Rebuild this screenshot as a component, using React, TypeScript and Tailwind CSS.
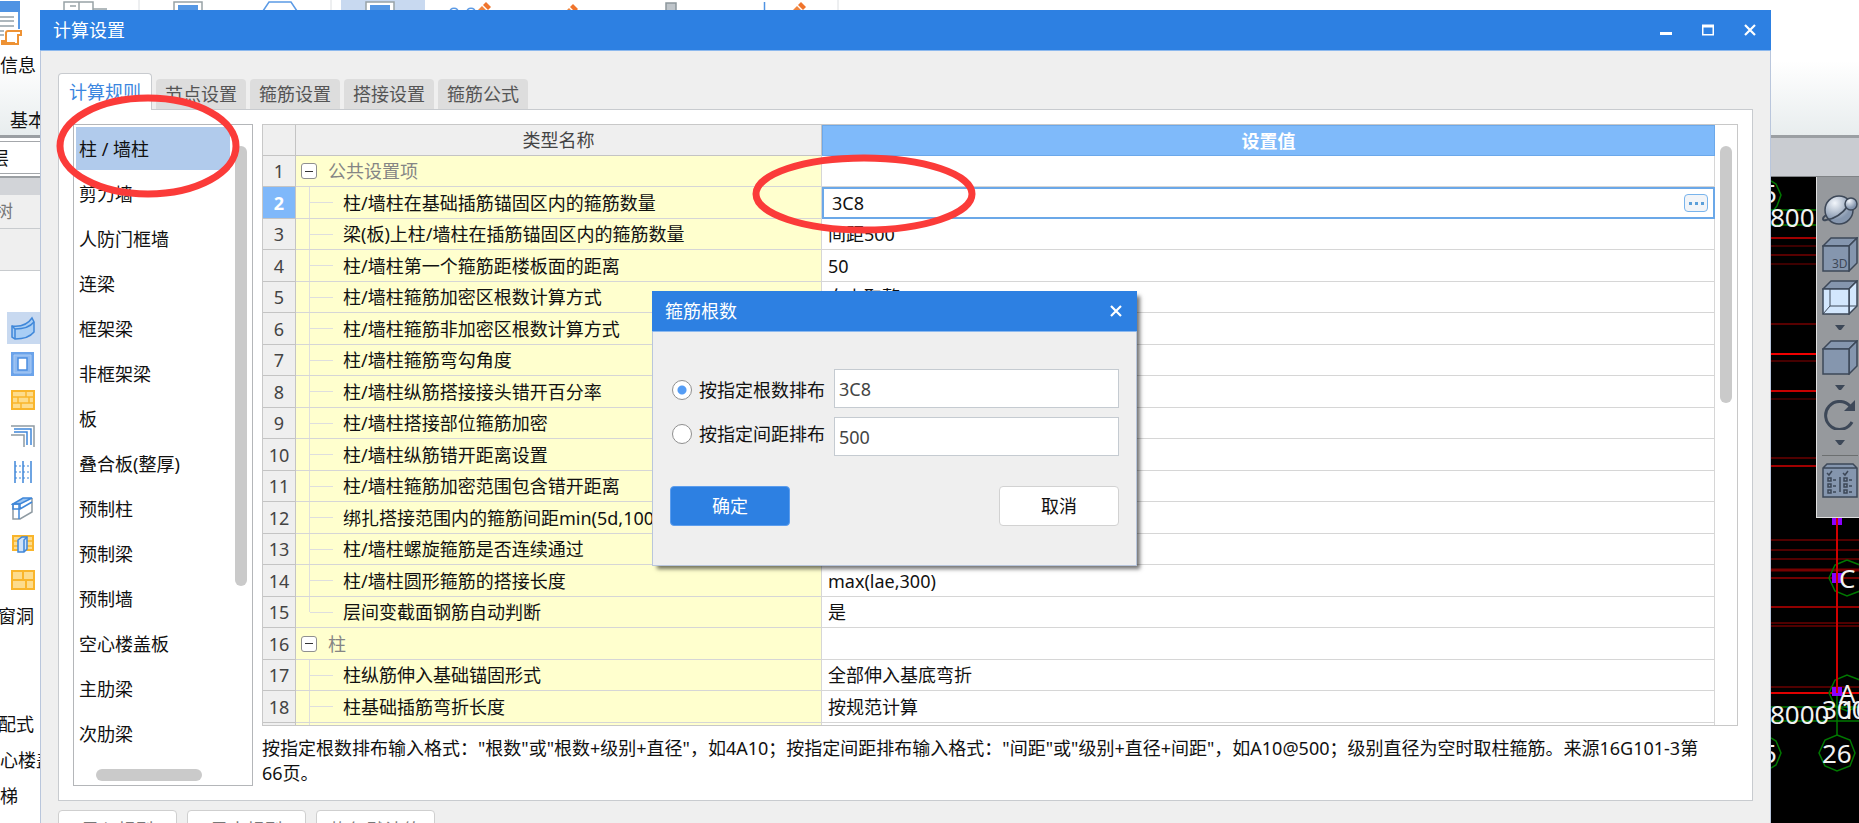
import { useState, type ReactNode } from 'react'

const TABS = ['计算规则', '节点设置', '箍筋设置', '搭接设置', '箍筋公式']

const CATEGORIES = [
  '柱 / 墙柱',
  '剪力墙',
  '人防门框墙',
  '连梁',
  '框架梁',
  '非框架梁',
  '板',
  '叠合板(整厚)',
  '预制柱',
  '预制梁',
  '预制墙',
  '空心楼盖板',
  '主肋梁',
  '次肋梁',
]

type Row = { name: string; value?: string; group?: boolean; last?: boolean }

const ROWS: Row[] = [
  { name: '公共设置项', group: true },
  { name: '柱/墙柱在基础插筋锚固区内的箍筋数量', value: '3C8' },
  { name: '梁(板)上柱/墙柱在插筋锚固区内的箍筋数量', value: '间距500' },
  { name: '柱/墙柱第一个箍筋距楼板面的距离', value: '50' },
  { name: '柱/墙柱箍筋加密区根数计算方式', value: '向上取整+1' },
  { name: '柱/墙柱箍筋非加密区根数计算方式' },
  { name: '柱/墙柱箍筋弯勾角度' },
  { name: '柱/墙柱纵筋搭接接头错开百分率' },
  { name: '柱/墙柱搭接部位箍筋加密' },
  { name: '柱/墙柱纵筋错开距离设置' },
  { name: '柱/墙柱箍筋加密范围包含错开距离' },
  { name: '绑扎搭接范围内的箍筋间距min(5d,100)' },
  { name: '柱/墙柱螺旋箍筋是否连续通过' },
  { name: '柱/墙柱圆形箍筋的搭接长度', value: 'max(lae,300)' },
  { name: '层间变截面钢筋自动判断', value: '是', last: true },
  { name: '柱', group: true },
  { name: '柱纵筋伸入基础锚固形式', value: '全部伸入基底弯折' },
  { name: '柱基础插筋弯折长度', value: '按规范计算' },
]

const ACTIVE_ROW = 1

function CloseIcon() {
  return (
    <svg width="12" height="12" viewBox="0 0 12 12" stroke="white" strokeWidth="2.2" aria-hidden="true">
      <path d="M1 1l10 10M11 1L1 11" />
    </svg>
  )
}

function Pencil({ x, y }: { x: number; y: number }) {
  return (
    <g transform={`translate(${x} ${y})`}>
      <path d="M8 0l5 5-3 3-5-5z" fill="#f0742c" />
      <path d="M4 4l5 5-4 4-5-5z" fill="#f0853f" />
      <path d="M4 3l6 6" stroke="#fff" />
    </g>
  )
}

function Ribbon() {
  return (
    <header className="relative h-[138px] border-b-[3px] border-[#9b9fa3] bg-linear-to-b from-white from-45% to-[#e8edee]">
      <svg className="absolute top-0 left-0" width="850" height="48" viewBox="0 0 850 48" aria-hidden="true">
        <path d="M0 1h20v11H0z" fill="#4f93e3" />
        <path d="M19 12v17" stroke="#5b9ae5" strokeWidth="2" />
        <path d="M0 17h14M0 21h14M0 26h14M0 31h4M0 35h4" stroke="#93a0a8" strokeWidth="1.5" />
        <path d="M8 31h13v4h-3v9H2v-3h4V33c0-1 1-2 2-2z" fill="#fff" stroke="#ee9234" strokeWidth="2" />
        <path d="M1 42h14v3H1z" fill="#ee9234" />
        <g fill="none" stroke="#98a2a6" strokeWidth="1.5">
          <path d="M64 12V2h29v8M70 6h6M79 2v8M93 9h14" />
          <path d="M174 12V2h28v10" />
        </g>
        <path d="M178 5h20v7h-20z" fill="#5497e5" />
        <path d="M263 11l6-9h22l6 9" fill="none" stroke="#5b9ae5" strokeWidth="1.5" />
        <path d="M139 0v12M331 0v12M838 0v12" stroke="#dcdfe2" />
        <path d="M341 0h84v12h-84z" fill="#c8d9f0" />
        <path d="M366 12V2h28v10z" fill="#fff" stroke="#98a2a6" strokeWidth="1.5" />
        <path d="M370 5h20v7h-20z" fill="#5497e5" />
        <path d="M450 12c0-5 8-5 8 0M467 12c0-5 8-5 8 0" fill="none" stroke="#5b9ae5" strokeWidth="1.5" />
        <Pencil x={478} y={2} />
        <Pencil x={565} y={4} />
        <path d="M666 12V3h10v9" fill="#bfc5ca" stroke="#8d979c" strokeWidth="1.5" />
        <path d="M764.500 2v10" stroke="#4f93e3" strokeWidth="1.5" />
        <Pencil x={793} y={2} />
      </svg>
      <div className="pt-[52px] leading-[26px]">信息</div>
      <div className="pt-[29px] pl-[10px] leading-[26px]">基本</div>
    </header>
  )
}

function ToolIcon({ children }: { children: ReactNode }) {
  return (
    <svg width="24" height="24" viewBox="0 0 24 24" fill="none" aria-hidden="true">
      {children}
    </svg>
  )
}

const TOOL_ICONS = [
  {
    label: '弧形梁',
    icon: (
      <ToolIcon>
        <path d="M1 10c9 1 16-2 20-8l2 4v10c-4 5-10 7-19 7l-3-2z" fill="#a9cef5" stroke="#3f87d9" strokeWidth="1.500" />
        <path d="M1 10l3 3c9 0 15-2 19-7M4 13v10" stroke="#3f87d9" strokeWidth="1.500" />
      </ToolIcon>
    ),
  },
  {
    label: '柱',
    icon: (
      <ToolIcon>
        <path d="M0 0h23v24H0z" fill="#6ba3ea" />
        <path d="M3 3h17v18H3z" fill="#8fbaf0" stroke="#a9caf4" />
        <path d="M7 6h9v12H7z" fill="#fff" stroke="#4b8de0" strokeWidth="1.500" />
      </ToolIcon>
    ),
  },
  {
    label: '砌体墙',
    icon: (
      <ToolIcon>
        <path d="M1 3h22v18H1z" fill="#fddc8c" stroke="#f9b52b" strokeWidth="2" />
        <path d="M1 9h22M1 15h22M15 3v6M7 9v6M18 9v6M10 15v6" stroke="#f9b52b" strokeWidth="1.500" />
      </ToolIcon>
    ),
  },
  {
    label: '拐角',
    icon: (
      <ToolIcon>
        <path d="M0 2h23v21M0 11h13v12" stroke="#8f9ba3" strokeWidth="1.500" />
        <path d="M3 5h17v16M3 8h13v13" stroke="#3f87d9" strokeWidth="1.500" />
      </ToolIcon>
    ),
  },
  {
    label: '钢筋',
    icon: (
      <ToolIcon>
        <path d="M4 1v22M12 1v22M20 1v22" stroke="#3f87d9" strokeWidth="1.500" />
        <path d="M4 6h16M4 12h16M4 18h16" stroke="#3f87d9" strokeDasharray="2 2" />
      </ToolIcon>
    ),
  },
  {
    label: '墙体',
    icon: (
      <ToolIcon>
        <path d="M2 8v15h7l12-7V2" fill="#fff" stroke="#8f9ba3" strokeWidth="1.500" />
        <path d="M2 8L12 2h9l-12 6zM8 8v15" fill="#9cc5f3" stroke="#3f87d9" strokeWidth="1.500" />
        <path d="M2 8h7v5H2zM9 13l12-7" stroke="#3f87d9" strokeWidth="1.500" />
      </ToolIcon>
    ),
  },
  {
    label: '门',
    icon: (
      <ToolIcon>
        <path d="M2 4h20v14H2z" fill="#fddc8c" stroke="#f9b52b" strokeWidth="2" />
        <path d="M2 9h20M2 14h20" stroke="#f9b52b" strokeWidth="1.500" />
        <path d="M7 8l4-3h5v12l-3 3H7z" fill="#cfe3fa" stroke="#3f87d9" strokeWidth="1.500" />
        <path d="M13 20V8l3-3" stroke="#3f87d9" strokeWidth="1.500" />
      </ToolIcon>
    ),
  },
  {
    label: '板',
    icon: (
      <ToolIcon>
        <path d="M1 3h22v18H1zM1 12h22M12 3v9M15 12v9" fill="#fddc8c" stroke="#f9b52b" strokeWidth="2" />
      </ToolIcon>
    ),
  },
]

function Sidebar() {
  return (
    <aside className="w-10 shrink-0 overflow-hidden bg-white whitespace-nowrap">
      <div className="mt-[3px] h-[33px] border-y border-[#a4a7ab] leading-[32px]">
        <span className="-ml-[9px]">层</span>
      </div>
      <div className="mt-[2px] h-[19px] border-t-2 border-[#9b9fa3] bg-[#d2d4d8]" />
      <div className="h-[34px] border-b border-[#c8cbce] bg-[#efefef] leading-[33px] text-[#777]">
        <span className="-ml-[5px]">树</span>
      </div>
      <div className="h-[42px] border-b border-[#c8cbce] bg-[#efefef]" />
      <div className="pt-[39px]">
        {TOOL_ICONS.map((tool, i) => (
          <div key={tool.label} className="flex h-9 items-center pl-[7px]">
            <button
              type="button"
              aria-label={tool.label}
              className={`flex h-8 w-full items-center pl-1 ${i === 0 ? 'bg-[#c8d9f0]' : ''}`}
            >
              {tool.icon}
            </button>
          </div>
        ))}
        <div className="h-9 leading-9">
          <span className="-ml-[2px]">窗洞</span>
        </div>
        <div className="mt-[72px] h-9 leading-9">
          <span className="-ml-[2px]">配式</span>
        </div>
        <div className="h-9 leading-9">心楼盖</div>
        <div className="h-9 leading-9">梯</div>
      </div>
    </aside>
  )
}

const BEAM_LINES = [
  { y: 61, w: 2, c: '#a00000' },
  { y: 69, w: 1, c: '#7c0000' },
  { y: 78, w: 1, c: '#b00000' },
  { y: 87, w: 1, c: '#7c0000' },
  { y: 147, w: 1, c: '#b00000' },
  { y: 177, w: 2, c: '#f00000' },
  { y: 184, w: 1, c: '#8c0000' },
  { y: 214, w: 2, c: '#c80000' },
  { y: 222, w: 1, c: '#6c0000' },
  { y: 281, w: 2, c: '#500000' },
  { y: 289, w: 2, c: '#a00000' },
  { y: 363, w: 2, c: '#500000' },
  { y: 373, w: 2, c: '#500000' },
  { y: 382, w: 2, c: '#500000' },
  { y: 393, w: 3, c: '#780000' },
  { y: 401, w: 1, c: '#e00000' },
  { y: 430, w: 2, c: '#900000' },
  { y: 446, w: 2, c: '#500000' },
  { y: 449, w: 2, c: '#500000' },
  { y: 510, w: 2, c: '#500000' },
  { y: 516, w: 2, c: '#e00000' },
]

function Drawing() {
  return (
    <svg className="absolute top-0 right-0" width="88" height="646" viewBox="0 0 88 646" aria-label="平面图">
      {BEAM_LINES.map((line) => (
        <path key={line.y} d={`M0 ${line.y}h88`} stroke={line.c} strokeWidth={line.w} />
      ))}
      <g fill="none" stroke="#007800" strokeWidth="1.5">
        <path d="M66 516v42M0 33h46M0 48h46M0 530h88M0 544h88" />
        <path d="M0 4l5 3 5 11-4 11-4 5" />
        <path d="M76 383l13 5M76 383l-12 5-6 13 6 13 12 5 13-5" />
        <path d="M89 503l-13-5-12 5-6 13 6 13 12 5 13-5" />
        <path d="M66 558l13 5 5 13-5 13-13 5-12-5-6-13 6-13z" />
        <path d="M0 561l5 3 5 12-5 12-5 3" />
      </g>
      <path d="M61 341h10v7H61zM61 396h10v10H61zM61 510h10v9H61z" fill="#8a00ff" />
      <path d="M66 341v175" stroke="#d00000" strokeWidth="2" />
      <g fill="#f2f2f2" fontSize="26">
        <text x="-9" y="26">5</text>
        <text x="-1" y="50">800</text>
        <text x="68" y="411">C</text>
        <text x="68" y="526">A</text>
        <text x="-1" y="547">8000</text>
        <text x="51" y="542">300</text>
        <text x="70" y="542">100</text>
        <text x="-9" y="586">5</text>
        <text x="51" y="586">26</text>
      </g>
    </svg>
  )
}

function CubeIcon({ kind }: { kind: '3d' | 'wire' | 'solid' }) {
  const face = kind === 'wire' ? '#d3e7fd' : '#8596ae'
  return (
    <svg width="36" height="35" viewBox="0 0 36 35" stroke="#3d4858" strokeWidth="1.500" aria-hidden="true">
      <path d="M1 9l8-8h26l-8 8z" fill="#8596ae" />
      <path d="M27 9l8-8v25l-8 8z" fill={face} />
      <path d="M1 9h26v25H1z" fill={face} />
      {kind === 'wire' && <path d="M8 9v17h27M8 26l-7 8" fill="none" strokeWidth="1" />}
      {kind === '3d' && (
        <text x="10" y="31" fontSize="12" fill="#3d4858" stroke="none">
          3D
        </text>
      )}
    </svg>
  )
}

function Caret() {
  return (
    <svg className="my-[10px]" width="10" height="5" viewBox="0 0 10 5" aria-hidden="true">
      <path d="M0 0h10L6 5H4z" fill="#3d4858" />
    </svg>
  )
}

function ViewToolbar() {
  return (
    <div className="absolute top-0 right-0 flex h-[341px] w-[43px] flex-col items-center border-b border-l border-[#e0e0e0] bg-[#96999d] pt-4 pl-[3px]">
      <button type="button" aria-label="动态观察">
        <svg width="36" height="32" viewBox="0 0 36 32" aria-hidden="true">
          <defs>
            <radialGradient id="sphere" cx="0.35" cy="0.25" r="0.6">
              <stop offset="0" stopColor="#f2f6fb" />
              <stop offset="1" stopColor="#8596ae" />
            </radialGradient>
          </defs>
          <g stroke="#3d4858" strokeWidth="1.500">
            <circle cx="17" cy="17" r="14" fill="url(#sphere)" />
            <path d="M4 22c-4 3-4 6 0 5 8-1 16-6 22-14" fill="none" strokeWidth="2" />
            <circle cx="29" cy="11" r="6" fill="url(#sphere)" />
          </g>
        </svg>
      </button>
      <button type="button" aria-label="三维" className="mt-3">
        <CubeIcon kind="3d" />
      </button>
      <button type="button" aria-label="线框" className="mt-2">
        <CubeIcon kind="wire" />
      </button>
      <Caret />
      <button type="button" aria-label="实体">
        <CubeIcon kind="solid" />
      </button>
      <Caret />
      <button type="button" aria-label="旋转">
        <svg width="36" height="30" viewBox="0 2 36 30" fill="none" aria-hidden="true">
          <path d="M30 24A14 14 0 1 1 28 8" stroke="#3d4858" strokeWidth="3" />
          <path d="M33 2v11H22z" fill="#3d4858" />
        </svg>
      </button>
      <Caret />
      <div className="h-px w-9 bg-[#6c6f70]" />
      <button type="button" aria-label="显示设置" className="mt-[7px]">
        <svg width="36" height="35" viewBox="0 0 36 35" fill="none" stroke="#3d4858" strokeWidth="1.500" aria-hidden="true">
          <path d="M1 5l4-4h26l4 4v29H1zM1 5h34" fill="#8596ae" />
          <path d="M5 10l2 2 3-4M21 10l2 2 3-4M18 14v15" />
          <path d="M6 15h3v3H6zM6 21h3v3H6zM6 27h3v3H6zM22 15h3v3h-3zM22 21h3v3h-3zM22 27h3v3h-3z" />
          <path d="M11 17h3M11 23h3M11 29h3M27 17h3M27 23h3M27 29h3" />
        </svg>
      </button>
    </div>
  )
}

function CategoryList() {
  const [selected, setSelected] = useState(0)
  return (
    <div className="flex w-[180px] shrink-0 flex-col border border-[#b4b6b9] bg-white p-[2px]">
      <div className="flex justify-between">
        <ul className="w-[154px]">
          {CATEGORIES.map((name, i) => (
            <li key={name} className="h-[45px]">
              <button
                type="button"
                onClick={() => setSelected(i)}
                className={`flex h-[43px] w-full items-center pl-[3px] ${i === selected ? 'bg-[#b1cbec]' : ''}`}
              >
                {name}
              </button>
            </li>
          ))}
        </ul>
        <div className="mt-[19px] mr-[3px] h-[440px] w-3 rounded-full bg-[#cacaca]" />
      </div>
      <div className="mt-auto mb-[2px] ml-5 h-3 w-[106px] rounded-full bg-[#cacaca]" />
    </div>
  )
}

function Collapse() {
  return (
    <button
      type="button"
      aria-label="折叠"
      className="flex size-4 items-center justify-center rounded-[3px] border border-[#8f8f8f] bg-white"
    >
      <span className="h-px w-2 bg-[#333]" />
    </button>
  )
}

function NameCell({ row }: { row: Row }) {
  if (row.group) {
    return (
      <div className="flex items-center gap-[11px] pl-[5px] text-[#858585]">
        <Collapse />
        {row.name}
      </div>
    )
  }
  return (
    <div className="ml-[13px] flex h-full items-center">
      <div className={`h-full w-px ${row.last ? 'bg-linear-to-b from-[#dedede] from-50% to-transparent to-50%' : 'bg-[#dedede]'}`} />
      <div className="mr-[10px] h-px w-[23px] bg-[#dedede]" />
      {row.name}
    </div>
  )
}

function SettingsTable() {
  return (
    <div className="flex h-[602px] overflow-hidden border border-[#c8c8c8]">
      <table className="h-fit w-full table-fixed border-separate border-spacing-0 whitespace-nowrap">
        <colgroup>
          <col className="w-[33px]" />
          <col className="w-[526px]" />
          <col />
        </colgroup>
        <thead>
          <tr className="h-[31px] text-[#444]">
            <th className="border-r border-b border-[#c4c4c4] bg-[#efefef]" aria-label="序号" />
            <th className="border-r border-b border-[#c4c4c4] bg-[#efefef] p-0 font-normal">类型名称</th>
            <th className="border border-[#6ba8ea] bg-[#7fbafa] p-0 font-bold text-white">设置值</th>
          </tr>
        </thead>
        <tbody>
          {ROWS.map((row, i) => (
            <tr key={row.name} className="odd:h-[31px] even:h-[32px]">
              <td
                className={`border-r border-b border-[#c4c4c4] p-0 text-center ${
                  i === ACTIVE_ROW ? 'bg-[#7fb8fa] font-bold text-white' : 'bg-[#efefef] text-[#444]'
                }`}
              >
                {i + 1}
              </td>
              <td className="h-px border-r border-b border-[#d6d6d6] bg-[#ffffce] p-0">
                <NameCell row={row} />
              </td>
              {i === ACTIVE_ROW ? (
                <td className="p-0">
                  <div className="flex h-[32px] items-center border-2 border-[#6ba8e8] bg-white pr-[5px] pl-2">
                    <input
                      aria-label={row.name}
                      defaultValue={row.value}
                      className="min-w-0 flex-1 leading-6 outline-none"
                    />
                    <button
                      type="button"
                      aria-label="更多"
                      className="flex h-[18px] w-6 items-center justify-center gap-[3px] rounded-[4px] border border-[#79b4ec] bg-[#f1f4f8]"
                    >
                      <span className="size-[3px] bg-[#5b9fd9]" />
                      <span className="size-[3px] bg-[#5b9fd9]" />
                      <span className="size-[3px] bg-[#5b9fd9]" />
                    </button>
                  </div>
                </td>
              ) : (
                <td className="border-r border-b border-[#d6d6d6] p-0 pl-[6px]">{row.value}</td>
              )}
            </tr>
          ))}
          <tr className="h-[31px]">
            <td className="border-r border-[#c4c4c4] bg-[#efefef]" />
            <td className="h-px border-r border-[#d6d6d6] bg-[#ffffce] p-0">
              <div className="ml-[13px] h-full w-px bg-[#dedede]" />
            </td>
            <td className="border-r border-[#d6d6d6]" />
          </tr>
        </tbody>
      </table>
      <div className="w-[22px] shrink-0 px-[5px] pt-[21px]">
        <div className="h-[257px] w-3 rounded-full bg-[#cacaca]" />
      </div>
    </div>
  )
}

const RADIO =
  'size-5 appearance-none rounded-full border border-[#8f8f8f] bg-white checked:bg-[radial-gradient(circle,#559df5_4px,white_5px)]'
const FIELD = 'h-[39px] w-full border border-[#c5cbd1] bg-white pl-1 text-[#444] outline-none'

function StirrupDialog() {
  const [mode, setMode] = useState('count')
  return (
    <section
      role="dialog"
      aria-label="箍筋根数"
      className="absolute top-[281px] left-[611px] w-[485px] border border-[#b9c6dc] bg-[#efefef] shadow-[4px_4px_4px_-1px_rgba(0,0,0,0.55)]"
    >
      <div className="-mx-px -mt-px flex h-[41px] items-center justify-between border-b border-[#8db9ee] bg-[#2d80e2] pr-[15px] pl-[13px] text-white">
        <h2>箍筋根数</h2>
        <button type="button" aria-label="关闭">
          <CloseIcon />
        </button>
      </div>
      <form className="px-[17px] pt-[37px] pb-[39px]" onSubmit={(e) => e.preventDefault()}>
        <div className="flex justify-between">
          <div className="flex flex-col gap-[18px] pt-2">
            <label className="flex items-center gap-[7px] pl-[2px] leading-[26px]">
              <input
                type="radio"
                name="mode"
                className={RADIO}
                checked={mode === 'count'}
                onChange={() => setMode('count')}
              />
              按指定根数排布
            </label>
            <label className="flex items-center gap-[7px] pl-[2px] leading-[26px]">
              <input
                type="radio"
                name="mode"
                className={RADIO}
                checked={mode === 'spacing'}
                onChange={() => setMode('spacing')}
              />
              按指定间距排布
            </label>
          </div>
          <div className="flex w-[285px] flex-col gap-[9px]">
            <input aria-label="按指定根数排布" defaultValue="3C8" className={FIELD} />
            <input aria-label="按指定间距排布" defaultValue="500" className={FIELD} />
          </div>
        </div>
        <div className="mt-[30px] flex justify-between">
          <button type="submit" className="h-10 w-[120px] rounded-[4px] border border-[#5c9ded] bg-[#2d80e2] text-white">
            确定
          </button>
          <button type="button" className="h-10 w-[120px] rounded-[4px] border border-[#d2d2d2] bg-white">
            取消
          </button>
        </div>
      </form>
    </section>
  )
}

function SettingsWindow() {
  const [tab, setTab] = useState(0)
  return (
    <section
      role="dialog"
      aria-label="计算设置"
      className="absolute top-[10px] right-[88px] left-10 border-x border-[#b9c6dc] bg-[#efefef]"
    >
      <div className="-mx-px flex h-[41px] items-center justify-between border-b border-[#8db9ee] bg-[#2d80e2] pr-[15px] pl-[13px] text-white">
        <h1>计算设置</h1>
        <div className="flex items-center gap-[30px]">
          <button type="button" aria-label="最小化">
            <svg width="12" height="12" viewBox="0 0 12 12" aria-hidden="true">
              <path d="M0 8h12v3H0z" fill="white" />
            </svg>
          </button>
          <button type="button" aria-label="最大化">
            <svg width="12" height="12" viewBox="0 0 12 12" aria-hidden="true">
              <path d="M0 0.500h12v11H0zM1.500 3.500v6.500h9V3.500z" fill="white" fillRule="evenodd" />
            </svg>
          </button>
          <button type="button" aria-label="关闭">
            <CloseIcon />
          </button>
        </div>
      </div>

      <div className="px-[17px] pt-[22px]">
        <div role="tablist" className="flex h-9 items-end gap-1">
          {TABS.map((name, i) => (
            <button
              key={name}
              type="button"
              role="tab"
              aria-selected={i === tab}
              onClick={() => setTab(i)}
              className={
                i === tab
                  ? 'relative -mb-px h-[37px] w-[94px] rounded-t-[4px] border border-b-0 border-[#c8cbcf] bg-white text-[#3b86e0]'
                  : 'h-[30px] w-[90px] rounded-t-[4px] bg-[#dddddd] text-[#555]'
              }
            >
              {name}
            </button>
          ))}
        </div>
        <div className="flex gap-[9px] border border-[#c8cbcf] bg-white p-[14px]">
          <CategoryList />
          <div className="min-w-0 flex-1">
            <SettingsTable />
            <p className="min-h-[60px] pt-[10px] pr-6 leading-[25px]">
              按指定根数排布输入格式："根数"或"根数+级别+直径"，如4A10；按指定间距排布输入格式："间距"或"级别+直径+间距"，如A10@500；级别直径为空时取柱箍筋。来源16G101-3第66页。
            </p>
          </div>
        </div>
        <div className="mt-[9px] flex gap-[10px] pb-4">
          {['导入规则', '导出规则', '恢复默认值'].map((name) => (
            <button
              key={name}
              type="button"
              className="h-10 w-[119px] rounded-[4px] border border-[#cfcfcf] bg-white text-[#777]"
            >
              {name}
            </button>
          ))}
        </div>
      </div>

      <StirrupDialog />
    </section>
  )
}

export default function App() {
  return (
    <div className="relative flex h-screen flex-col overflow-hidden bg-white font-['Noto_Sans','Noto_Sans_CJK_SC',sans-serif] text-[18px] leading-[26px] text-[#111]">
      <Ribbon />
      <div className="flex flex-1">
        <Sidebar />
        <div className="flex flex-1 flex-col">
          <div className="h-[39px] border-b border-[#808386] bg-[#c9ccd1]" />
          <div className="relative flex-1 overflow-hidden bg-black">
            <Drawing />
            <ViewToolbar />
          </div>
        </div>
      </div>

      <SettingsWindow />

      <svg className="pointer-events-none absolute top-0 left-0" width="1000" height="250" fill="none" aria-hidden="true">
        <ellipse cx="148" cy="146" rx="88" ry="48" stroke="#fb3b39" strokeWidth="7" />
        <ellipse cx="864" cy="194" rx="108" ry="36" stroke="#fb3b39" strokeWidth="7" />
      </svg>
    </div>
  )
}
